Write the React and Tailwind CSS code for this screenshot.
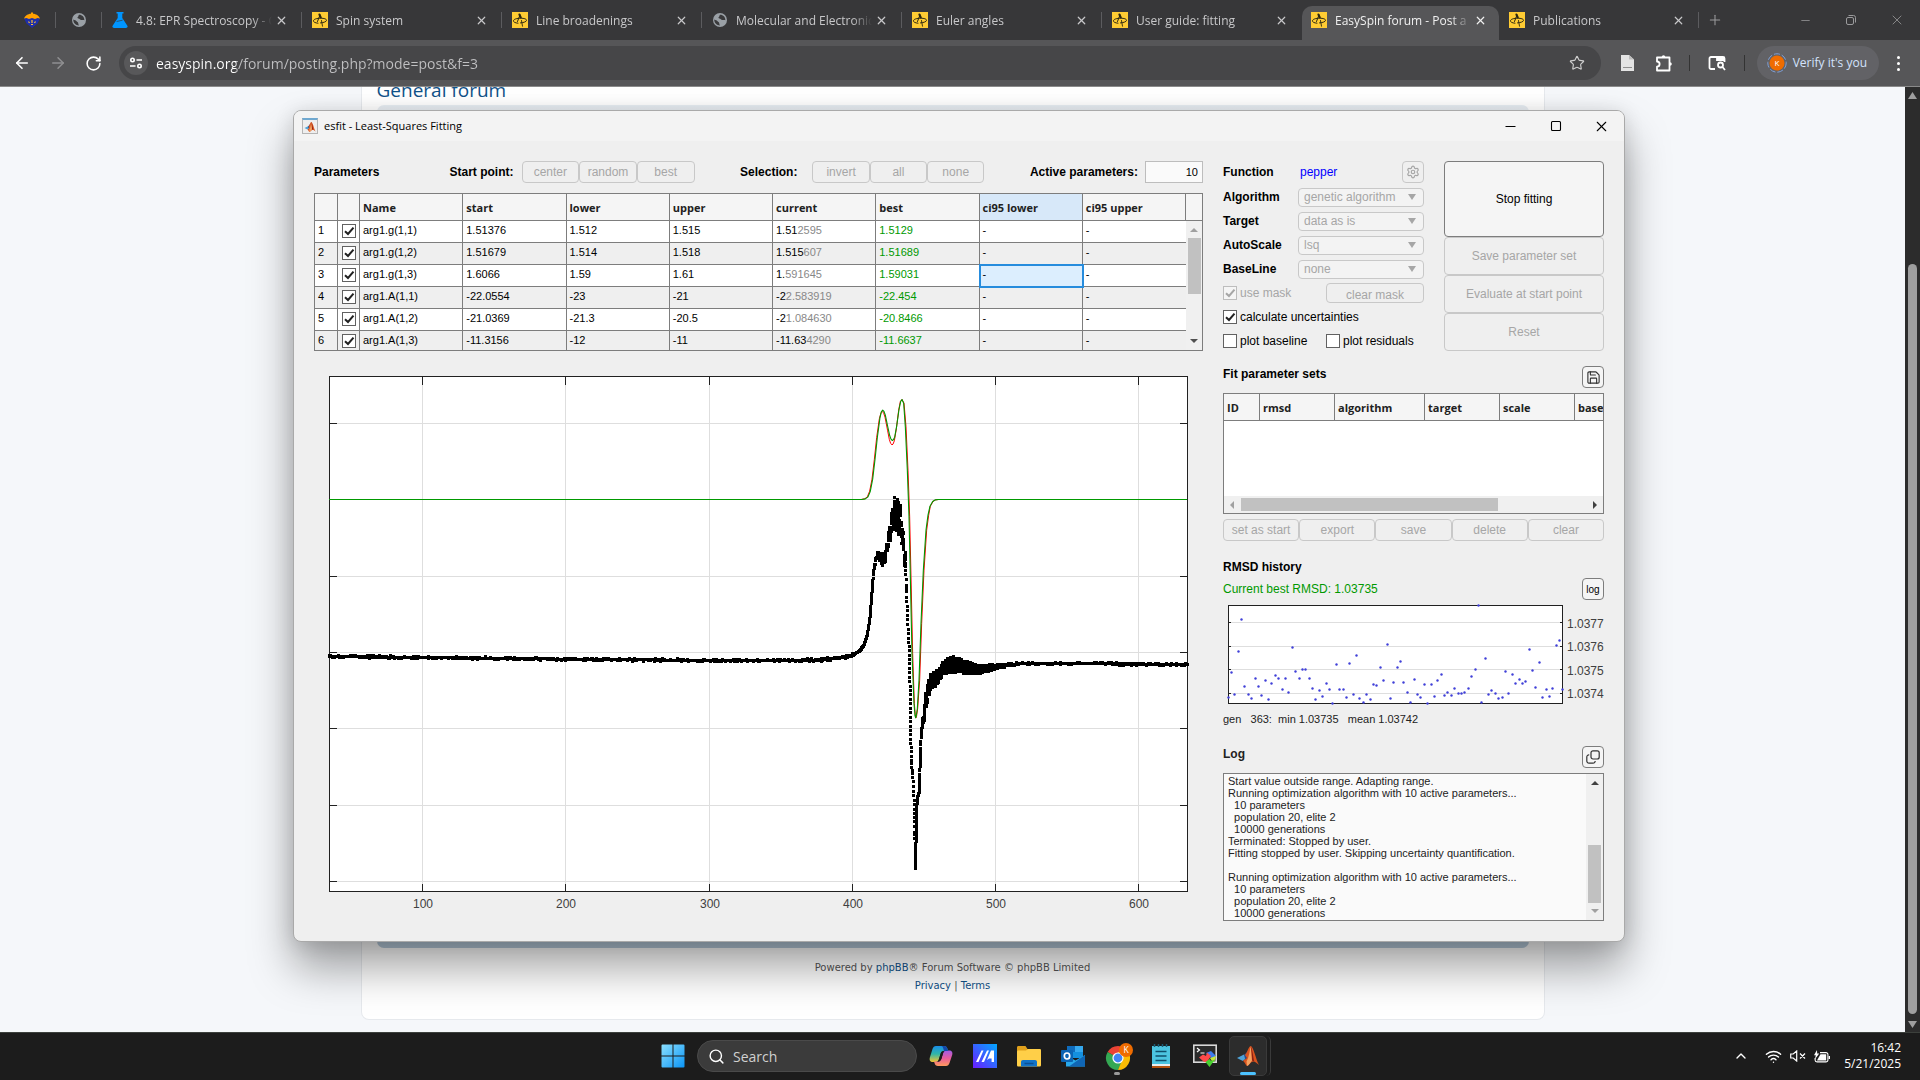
import {
  ArrowLeft,
  ArrowRight,
  ChevronUp,
  Minus,
  Plus,
  RotateCw,
  Save,
  Search,
  Settings,
  Square,
  Star,
  Wifi,
  X,
} from 'lucide-react';

const TABS = [
  { id: 'epr', icon: 'flask', title: '4.8: EPR Spectroscopy - C' },
  { id: 'spin', icon: 'easyspin', title: 'Spin system' },
  { id: 'line', icon: 'easyspin', title: 'Line broadenings' },
  { id: 'mol', icon: 'globe', title: 'Molecular and Electronic' },
  { id: 'euler', icon: 'easyspin', title: 'Euler angles' },
  { id: 'guide', icon: 'easyspin', title: 'User guide: fitting', last: true },
  { id: 'forum', icon: 'easyspin', title: 'EasySpin forum - Post a', active: true },
  { id: 'pubs', icon: 'easyspin', title: 'Publications' },
];

const PARAMETERS = [
  { name: 'arg1.g(1,1)', start: '1.51376', lower: '1.512', upper: '1.515', same: '1.51', rest: '2595', best: '1.5129' },
  { name: 'arg1.g(1,2)', start: '1.51679', lower: '1.514', upper: '1.518', same: '1.515', rest: '607', best: '1.51689' },
  { name: 'arg1.g(1,3)', start: '1.6066', lower: '1.59', upper: '1.61', same: '1.', rest: '591645', best: '1.59031', selected: true },
  { name: 'arg1.A(1,1)', start: '-22.0554', lower: '-23', upper: '-21', same: '-2', rest: '2.583919', best: '-22.454' },
  { name: 'arg1.A(1,2)', start: '-21.0369', lower: '-21.3', upper: '-20.5', same: '-2', rest: '1.084630', best: '-20.8466' },
  { name: 'arg1.A(1,3)', start: '-11.3156', lower: '-12', upper: '-11', same: '-11.63', rest: '4290', best: '-11.6637' },
];

const OPTIONS = [
  { id: 'algorithm', label: 'Algorithm', value: 'genetic algorithm' },
  { id: 'target', label: 'Target', value: 'data as is' },
  { id: 'autoscale', label: 'AutoScale', value: 'lsq' },
  { id: 'baseline', label: 'BaseLine', value: 'none' },
];

const LOG = `Start value outside range. Adapting range.
Running optimization algorithm with 10 active parameters...
  10 parameters
  population 20, elite 2
  10000 generations
Terminated: Stopped by user.
Fitting stopped by user. Skipping uncertainty quantification.

Running optimization algorithm with 10 active parameters...
  10 parameters
  population 20, elite 2
  10000 generations`;

const RMSD = [
  [0, 92], [3, 67], [6, 89], [10, 46], [13, 14], [16, 81], [20, 89], [23, 93], [27, 73], [30, 81], [33, 90], [37, 75],
  [40, 94], [43, 78], [47, 70], [50, 73], [54, 84], [57, 73], [60, 87], [64, 42], [67, 66], [71, 73], [74, 64], [77, 64],
  [81, 73], [84, 83], [87, 94], [91, 85], [94, 91], [98, 78], [101, 84], [104, 98], [108, 59], [111, 84], [115, 84],
  [118, 92], [121, 58], [125, 89], [128, 50], [131, 93], [135, 97], [138, 89], [142, 94], [145, 79], [148, 80], [152, 62],
  [155, 75], [159, 39], [162, 93], [165, 77], [169, 62], [172, 56], [175, 77], [179, 87], [182, 97], [186, 74], [189, 89],
  [192, 92], [196, 79], [199, 98], [203, 79], [206, 91], [209, 75], [213, 69], [216, 90], [219, 87], [223, 90], [226, 83],
  [230, 88], [233, 88], [236, 87], [240, 83], [243, 71], [247, 64], [250, 0], [253, 97], [257, 53], [260, 89], [263, 85],
  [267, 88], [270, 93], [274, 92], [277, 66], [280, 88], [284, 69], [287, 78], [291, 74], [294, 78], [297, 76], [301, 44],
  [304, 65], [307, 82], [311, 57], [314, 92], [318, 84], [321, 91], [324, 83], [328, 40], [331, 35], [334, 84],
];

// Spectra around the resonance, in thirds of a chart unit
const BEST = [
  [-1413, 388], [185, 388], [196, 386], [204, 380], [211, 363], [218, 327], [225, 268], [232, 202], [240, 142], [244, 125],
  [248, 120], [252, 124], [256, 135], [264, 173], [269, 196], [273, 207], [277, 211], [280, 209], [284, 201], [290, 168],
  [297, 118], [302, 94], [306, 88], [311, 99], [316, 170], [322, 300], [327, 440], [331, 620], [336, 850], [342, 1000],
  [345, 1036], [347, 1043], [349, 1036], [352, 1015], [357, 930], [363, 760], [370, 600], [378, 480], [384, 435],
  [390, 408], [398, 394], [406, 389], [415, 388], [1161, 388],
];
const CURRENT = [
  [-1413, 388], [183, 388], [194, 386], [202, 380], [209, 363], [216, 327], [223, 268], [230, 202], [238, 146], [243, 128],
  [247, 124], [251, 129], [255, 141], [263, 182], [268, 208], [272, 220], [276, 224], [279, 222], [283, 212], [289, 176],
  [296, 120], [301, 94], [306, 88], [312, 99], [318, 170], [324, 300], [329, 440], [333, 620], [338, 850], [343, 1000],
  [346, 1036], [348, 1043], [350, 1036], [353, 1015], [359, 930], [365, 760], [372, 600], [380, 480], [386, 435],
  [391, 408], [399, 394], [407, 389], [416, 388], [1161, 388],
];

// [x, y, ripple]
const TRACE = [
  [-1413, 858, 3], [-1134, 861, 3], [-702, 866, 3], [-273, 870, 3], [0, 870, 3], [60, 868, 3], [110, 864, 3], [140, 858, 3],
  [160, 852, 3], [178, 841, 2], [190, 825, 2], [200, 795, 2], [208, 745, 2], [214, 670, 3], [220, 600, 4], [227, 560, 6],
  [235, 553, 12], [246, 570, 16], [255, 560, 16], [262, 515, 22], [270, 480, 30], [278, 440, 44], [287, 428, 60],
  [296, 438, 50], [302, 450, 40], [308, 530, 50], [315, 560, 30], [316, 600, 4], [320, 720, 4], [324, 790, 4], [328, 880, 0],
  [329, 1000, 0], [331, 1080, 0], [332, 1170, 0], [337, 1220, 0], [341, 1290, 0], [343, 1380, 6], [345, 1494, 4],
  [347, 1390, 6], [350, 1285, 4], [356, 1265, 6], [359, 1180, 4], [362, 1085, 3], [368, 1055, 20], [375, 990, 24],
  [382, 970, 34], [390, 935, 24], [400, 930, 26], [412, 918, 20], [430, 890, 20], [450, 884, 24], [470, 882, 22],
  [490, 889, 18], [510, 893, 16], [540, 897, 12], [560, 893, 9], [600, 886, 5], [660, 880, 5], [720, 880, 3],
  [900, 879, 3], [1161, 883, 3],
];

const cx = (x) => 471 + x / 3;
const cy = (y) => y / 3 - 6;

function noise(i) {
  const s = Math.sin(i * 12.9898) * 43758.5453;
  return (s - Math.floor(s)) * 2 - 1;
}

function linePath(points) {
  return points.map(([x, y], i) => `${i ? 'L' : 'M'}${cx(x).toFixed(2)} ${(cy(y) + 0.17).toFixed(2)}`).join('');
}

function dotPath(knots) {
  let d = '';
  let n = 0;
  for (let k = 1; k < knots.length; k++) {
    const [x0, y0, a0] = knots[k - 1];
    const [x1, y1, a1] = knots[k];
    const rippled = Math.max(a0, a1) > 7;
    // samples thin out on the falling edge
    const spacing = x0 > 315 && x0 < 345 ? 14 : 8;
    const steps = Math.ceil(Math.max((x1 - x0) * (rippled ? 4 : 1), Math.abs(y1 - y0) / spacing, 2));
    for (let i = 0; i < steps; i++) {
      const t = i / steps;
      const x = x0 + (x1 - x0) * t;
      const amp = a0 + (a1 - a0) * t;
      const ripple = rippled ? Math.sin(x * 0.75) * amp * 0.75 + noise(n) * amp * 0.35 : noise(n) ** 7 * amp * 1.5;
      const y = y0 + (y1 - y0) * t + ripple;
      d += `M${Math.round(cx(x))} ${Math.round(cy(y))}h0`;
      n += 1;
    }
  }
  return d;
}

const X_TICKS = [
  [93, '100'],
  [236, '200'],
  [380, '300'],
  [523, '400'],
  [666, '500'],
  [809, '600'],
];
const Y_TICKS = [47, 123, 200, 276, 352, 429, 505];

function EasySpinIcon() {
  return (
    <svg viewBox="0 0 16 16" className="size-4 shrink-0">
      <rect width="16" height="16" fill="#ffcc33" />
      <g fill="none" stroke="#2b2712" strokeLinecap="round">
        <path d="M6 11.200C3 11 1.200 10 1.500 8.600c.3-1.400 3.500-2.400 7-2.400 3.800 0 6.200.9 6 2.200-.2 1.300-2.500 2.200-6 2.500" strokeWidth="1" />
        <path d="M9.500 8.500l1 5.700" strokeWidth=".9" />
        <path d="M8 3L5.500 9.500" strokeWidth="1" />
        <path d="M7.400 2.500l1.400 3" strokeWidth="2" />
      </g>
    </svg>
  );
}

function GlobeIcon() {
  return (
    <svg viewBox="0 0 16 16" className="size-4 shrink-0">
      <circle cx="8" cy="8" r="7" fill="#9aa0a6" />
      <path
        d="M2.2 7.5c1.6.6 2.8.8 3.4 1.8.5.9 1.5.8 1.6 1.8.1 1 .2 1.600.8 2.400C4.800 13.400 2.300 11 2.200 7.500zM8 2.800c-.8.8-.2 1.600-1.200 2.200-.8.5-.3 1.300.6 1.500 1.200.3 1.600 1.300 2.800 1.500 1.400.200 2.300-.2 3.200.2C13.300 5 11.200 2.700 8 2.800z"
        fill="#3a3a3c"
      />
    </svg>
  );
}

function FlaskIcon() {
  return (
    <svg viewBox="0 0 16 16" className="size-4 shrink-0" fill="#0095ff">
      <path d="M4.500 0h7v1.600h-7zM5.700 1.600h4.600v4.400l4.900 7.400c.9 1.300.2 2.600-1.300 2.600H2.100c-1.500 0-2.200-1.300-1.300-2.600l4.900-7.400z" />
      <path d="M4.600 9.500l6-1.300" stroke="#37373a" strokeWidth=".7" />
    </svg>
  );
}

function CrestIcon() {
  return (
    <svg viewBox="0 0 16 16" className="size-4">
      <path d="M0 6.500L8 5l8 1.500-2.500 5L8 16l-5.500-4.500z" fill="#1f2fa8" />
      <path d="M0 6.500C1.500 3 4.500 2 7 1.800V.5h2v1.300c2.500.2 5.500 1.200 7 4.700l-2.500-.5L11 7 8 6 5 7 2.500 6z" fill="#ffa000" />
      <path d="M4.500 9.500l1 1.500M8 8v3M11.500 9.500l-1 1.500M7 12.500h2" stroke="#ffc233" strokeWidth="1.200" />
    </svg>
  );
}

function TabIcon({ name }) {
  if (name === 'flask') return <FlaskIcon />;
  if (name === 'globe') return <GlobeIcon />;
  return <EasySpinIcon />;
}

function MatlabMark({ className }) {
  return (
    <svg viewBox="0 0 24 24" className={className}>
      <path d="M1 14l7-3.500 3 3.200L6.800 17z" fill="#4fa3d8" />
      <path d="M8 10.500c2-.5 3.300-3.300 5-5.500l-2 8.700-1.800 1.800z" fill="#2b4a8a" />
      <path d="M14.500 2c-1.700.5-3 6-5.500 9l2 3-4.200 3c1.800.4 2.600 4 4.200 5 2-.5 3.500-4 6-4.500 2.500 0 4 2 6 3.500-3-5-5.500-19-8.500-19z" fill="#d9531e" />
      <path d="M14.500 2c-.7 5-1.500 11-4 15.500L11 22c2-.5 3.500-4 5-5.500-.5-5-.5-10-1.500-14.500z" fill="#f4a261" />
      <path d="M14.500 2c1 4 1.500 9.500 1.500 14.500l2.300 1C17 12 16.500 5 14.500 2z" fill="#8c1f12" />
    </svg>
  );
}

function TabStrip() {
  return (
    <header className="flex h-10 items-stretch bg-[#373739] pl-[9px] font-['Open_Sans',sans-serif] text-[12px] text-[#c8c8ca]">
      <button aria-label="Pinned tab" className="flex w-[46px] items-center justify-center">
        <CrestIcon />
      </button>
      <span className="my-3 w-px bg-[#5c5c5f]" />
      <button aria-label="Pinned tab" className="flex w-[45px] items-center justify-center">
        <GlobeIcon />
      </button>
      <span className="my-3 w-px bg-[#5c5c5f]" />
      {TABS.map((tab) => (
        <div
          key={tab.id}
          className={
            tab.active
              ? 'mt-[6px] flex w-[197px] items-center rounded-t-[10px] bg-[#565658] pb-[6px] pl-[9px] pr-2 text-[#f0f0f0]'
              : 'flex w-[200px] items-center pl-[10px]'
          }
        >
          <TabIcon name={tab.icon} />
          <span className="ml-2 w-[136px] shrink-0 overflow-hidden whitespace-nowrap pt-[2px] [mask-image:linear-gradient(to_right,black_116px,transparent_136px)]">
            {tab.title}
          </span>
          <button aria-label={`Close ${tab.title}`} className="ml-[3px]">
            <X size={13} strokeWidth={2.2} />
          </button>
          {!tab.active && !tab.last && <span className="ml-auto h-4 w-px bg-[#5c5c5f]" />}
        </div>
      ))}
      <button aria-label="New tab" className="ml-2">
        <Plus size={16} strokeWidth={1.6} className="text-[#9a9a9c]" />
      </button>
      <div className="ml-auto flex items-center text-[#9a9a9c]">
        <button aria-label="Minimize" className="flex w-[46px] justify-center">
          <Minus size={13} strokeWidth={1.400} />
        </button>
        <button aria-label="Restore" className="flex w-[46px] justify-center">
          <svg viewBox="0 0 12 12" className="size-3" fill="none" stroke="currentColor">
            <rect x="1.500" y="3.500" width="7" height="7" rx="1.500" />
            <path d="M3.500 1.500h5a2 2 0 0 1 2 2v5" />
          </svg>
        </button>
        <button aria-label="Close" className="flex w-[46px] justify-center">
          <X size={16} strokeWidth={1.200} />
        </button>
      </div>
    </header>
  );
}

function Toolbar() {
  return (
    <nav className="flex h-[47px] items-center border-b border-[#8a8a8a] bg-[#565658] font-['Open_Sans',sans-serif] text-[#e8e8e8]">
      <button aria-label="Back" className="ml-[13px]">
        <ArrowLeft size={18} strokeWidth={2.200} className="text-white" />
      </button>
      <button aria-label="Forward" className="ml-[18px]">
        <ArrowRight size={18} strokeWidth={2} className="text-[#8f8f91]" />
      </button>
      <button aria-label="Reload" className="ml-[18px]">
        <RotateCw size={17} strokeWidth={2.200} className="text-white" />
      </button>
      <div className="ml-[17px] flex h-[34px] flex-1 items-center rounded-full bg-[#464648] pl-[5px] pr-4">
        <button aria-label="Site information" className="flex size-6 items-center justify-center rounded-full bg-[#58585a]">
          <svg viewBox="0 0 14 14" className="size-[14px]" fill="none" stroke="#fff" strokeWidth="1.600">
            <circle cx="3.500" cy="4" r="1.700" />
            <path d="M7.500 4H13M1 10h5.500" />
            <circle cx="10.500" cy="10" r="1.700" />
          </svg>
        </button>
        <input
          aria-label="Address"
          defaultValue="easyspin.org/forum/posting.php?mode=post&f=3"
          className="ml-2 flex-1 bg-[linear-gradient(to_right,#fff_80px,#c0c0c2_80px)] bg-clip-text text-[14px] text-transparent outline-none"
        />
        <button aria-label="Bookmark this tab">
          <Star size={16} strokeWidth={1.700} className="text-[#cfcfcf]" />
        </button>
      </div>
      <button aria-label="Reading list" className="ml-[19px]">
        <svg viewBox="0 0 14 16" className="h-4 w-[14px]">
          <path d="M1 0h8l5 4.500V16H1z" fill="#e4e4e4" />
          <path d="M9 0v4.500h5z" fill="#bdbdbd" />
          <path d="M3 12.500h9" stroke="#8f8f8f" />
        </svg>
      </button>
      <button aria-label="Extensions" className="ml-[21px]">
        <svg viewBox="0 0 18 18" className="size-[18px]" fill="none" stroke="#fff" strokeWidth="1.800" strokeLinejoin="round">
          <path d="M2 3.500h12.500v13H2v-3.800c1.600 0 2.600-1.200 2.600-2.600S3.600 7.500 2 7.500z" />
          <path d="M6.700 3a1.800 1.800 0 0 1 3.600 0zM15 8.200a1.800 1.800 0 0 1 0 3.600z" fill="#fff" stroke="none" />
        </svg>
      </button>
      <span className="ml-[16px] h-4 w-px bg-[#333]" />
      <button aria-label="Search tabs" className="ml-[18px]">
        <svg viewBox="0 0 18 16" className="h-4 w-[18px]" fill="none" stroke="#fff" strokeWidth="1.800">
          <path d="M7 14H3a1.500 1.500 0 0 1-1.500-1.500v-9A1.500 1.500 0 0 1 3 2h12a1.500 1.500 0 0 1 1.500 1.500V7" />
          <path d="M9 3h7v2H9z" fill="#fff" />
          <circle cx="12.500" cy="10" r="2.500" />
          <path d="M14.500 12l2.500 3" />
        </svg>
      </button>
      <span className="ml-[18px] h-4 w-px bg-[#333]" />
      <button className="ml-3 flex h-[34px] items-center rounded-full bg-[#626266] pl-[10px] pr-3 text-[12px] text-[#d3e3fd]">
        <svg viewBox="0 0 20 20" className="mr-[6px] size-5">
          <circle cx="10" cy="10" r="9.200" fill="none" stroke="#7e9fd6" strokeDasharray="6 2" />
          <circle cx="10" cy="10" r="7.500" fill="#ef6c00" />
          <text x="10" y="13" textAnchor="middle" fontSize="8" fill="#fff">K</text>
        </svg>
        Verify it's you
      </button>
      <button aria-label="Menu" className="ml-[18px] mr-5 flex flex-col gap-[3px]">
        <i className="size-[3px] rounded-full bg-white" />
        <i className="size-[3px] rounded-full bg-white" />
        <i className="size-[3px] rounded-full bg-white" />
      </button>
    </nav>
  );
}

function ForumPage() {
  return (
    <main className="flex min-h-0 flex-1 overflow-hidden bg-[#f5f7fa]">
      <div className="flex min-w-0 flex-1 flex-col pb-3">
        <div className="mx-auto flex w-[1184px] flex-1 flex-col rounded-b-[8px] border border-t-0 border-[#e6e9ed] bg-white px-[15px]">
          <h2 className="-mt-[11px] h-[29px] font-['Open_Sans',sans-serif] text-[19px]/[28px] font-medium text-[#105289]">General forum</h2>
          <div className="flex-1 rounded-[7px] bg-gradient-to-b from-[#e8eef3] to-[#b7cbdc]" />
          <footer className="h-[71px] pt-[11px] text-center font-['DejaVu_Sans',sans-serif] text-[10px]/[18px] text-[#555]">
            <p>
              Powered by <a href="#phpbb" className="text-[#105289]">phpBB</a>® Forum Software © phpBB Limited
            </p>
            <p>
              <a href="#privacy" className="text-[#105289]">Privacy</a> | <a href="#terms" className="text-[#105289]">Terms</a>
            </p>
          </footer>
        </div>
      </div>
      <div className="flex w-[15px] flex-col items-center bg-[#2c2c2c] pb-1 pt-[5px]">
        <svg viewBox="0 0 9 7" className="h-[7px] w-[9px]" fill="#9f9f9f"><path d="M4.500 0L9 7H0z" /></svg>
        <div className="mb-[7px] mt-[165px] w-[9px] flex-1 rounded-full bg-[#9f9f9f]" />
        <svg viewBox="0 0 9 7" className="h-[7px] w-[9px]" fill="#9f9f9f"><path d="M4.500 7L9 0H0z" /></svg>
      </div>
    </main>
  );
}

function CheckBox({ id, label, name, checked, disabled }) {
  return (
    <span className="flex items-center gap-[3px]">
      <span className="grid size-[14px] shrink-0">
        <input
          id={id}
          type="checkbox"
          aria-label={name}
          defaultChecked={checked}
          disabled={disabled}
          className="col-start-1 row-start-1 size-[14px] appearance-none border border-[#616161] bg-white disabled:border-[#bdbdbd] disabled:bg-[#f5f5f5]"
        />
        {checked && (
          <svg viewBox="0 0 14 14" className="pointer-events-none col-start-1 row-start-1 size-[14px]" fill="none">
            <path d="M3 7.200L6 10l5.500-6.300" stroke={disabled ? '#a6a6a6' : '#212121'} strokeWidth="2" />
          </svg>
        )}
      </span>
      {label && <label htmlFor={id} className={disabled ? 'text-[#a6a6a6]' : 'text-black'}>{label}</label>}
    </span>
  );
}

function GrayButton({ children, className = '' }) {
  return (
    <button disabled className={`rounded-[4px] border border-[#c8c8c8] text-[12px] text-[#a6a6a6] ${className}`}>
      {children}
    </button>
  );
}

function ParameterTable() {
  const head = "border-b border-r border-[#7d7d7d] pl-[3px] pt-[2px] text-left font-['Open_Sans',sans-serif] text-[11px] font-bold text-[#212121]";
  const cell = 'border-b border-r border-[#7d7d7d] pb-[2px] pl-[3px] leading-none';
  return (
    <div className="mt-[10px] flex h-[158px] overflow-hidden border border-[#7d7d7d]">
      <div className="min-w-0 flex-1">
        <table className="w-full table-fixed border-separate border-spacing-0 text-[11px] text-black">
          <colgroup>
            <col className="w-[23px]" />
            <col className="w-[22px]" />
            <col />
            <col />
            <col />
            <col />
            <col />
            <col />
            <col />
            <col />
          </colgroup>
          <thead>
            <tr className="h-[27px] bg-[#f5f5f5]">
              <th className={head} />
              <th className={head} />
              <th className={head}>Name</th>
              <th className={head}>start</th>
              <th className={head}>lower</th>
              <th className={head}>upper</th>
              <th className={head}>current</th>
              <th className={head}>best</th>
              <th className={`${head} bg-[#d7e8f9]`}>ci95 lower</th>
              <th className={head}>ci95 upper</th>
            </tr>
          </thead>
          <tbody>
            {PARAMETERS.map((p, i) => (
              <tr key={p.name} className="h-[22px] bg-white even:bg-[#efefef]">
                <td className={cell}>{i + 1}</td>
                <td className="border-b border-r border-[#7d7d7d] pb-px pl-1">
                  <CheckBox id={`fit-${i}`} name={`Fit ${p.name}`} checked />
                </td>
                <td className={cell}>{p.name}</td>
                <td className={cell}>{p.start}</td>
                <td className={cell}>{p.lower}</td>
                <td className={cell}>{p.upper}</td>
                <td className={cell}>
                  {p.same}
                  <span className="text-[#888]">{p.rest}</span>
                </td>
                <td className={`${cell} text-[#009900]`}>{p.best}</td>
                <td className={p.selected ? `${cell} bg-[#dceefe] outline-2 -outline-offset-1 outline-[#268cdd]` : cell}>-</td>
                <td className="border-b border-[#7d7d7d] pb-[2px] pl-[3px] leading-none">-</td>
              </tr>
            ))}
          </tbody>
        </table>
      </div>
      <div className="flex w-4 flex-col items-center bg-[#f0f0f0]">
        <div className="h-[27px] w-full border-b border-[#7d7d7d] bg-[#f5f5f5]" />
        <svg viewBox="0 0 8 4" className="mt-[7px] h-1 w-2" fill="#a0a0a0"><path d="M4 0l4 4H0z" /></svg>
        <div className="mt-[6px] h-14 w-[13px] bg-[#c1c1c1]" />
        <svg viewBox="0 0 8 4" className="mb-[7px] mt-auto h-1 w-2" fill="#505050"><path d="M4 4l4-4H0z" /></svg>
      </div>
    </div>
  );
}

function SpectrumChart() {
  return (
    <svg viewBox="0 0 859 536" className="mx-[15px] mt-[25px] overflow-visible" shapeRendering="crispEdges">
      <rect x=".5" y=".5" width="858" height="515" fill="#fff" />
      <g stroke="#dedede">
        {X_TICKS.map(([x]) => <path key={x} d={`M${x + 0.5} 1V515`} />)}
        {Y_TICKS.map((y) => <path key={y} d={`M1 ${y + 0.5}H858`} />)}
      </g>
      <g stroke="#212121" fill="none">
        {X_TICKS.map(([x]) => <path key={x} d={`M${x + 0.5} 1v8M${x + 0.5} 515v-7`} />)}
        {Y_TICKS.map((y) => <path key={y} d={`M1 ${y + 0.5}h7M858 ${y + 0.5}h-7`} />)}
        <rect x=".5" y=".5" width="858" height="515" />
      </g>
      <path d={dotPath(TRACE)} stroke="#000" strokeWidth="3" strokeLinecap="square" />
      <g fill="none" strokeLinejoin="round" shapeRendering="geometricPrecision">
        <path d={linePath(CURRENT)} stroke="#ff0000" />
        <path d={linePath(BEST)} stroke="#009900" strokeWidth="1.100" />
      </g>
      <g fill="#404040" fontSize="12" textAnchor="middle" shapeRendering="auto">
        {X_TICKS.map(([x, label]) => <text key={x} x={x + 1} y="532">{label}</text>)}
      </g>
    </svg>
  );
}

function FitOptions() {
  return (
    <div className="flex w-[201px] flex-col text-[12px]">
      <div className="mb-[2px] flex h-[22px] items-center">
        <b className="w-[77px]">Function</b>
        <span className="text-[#0000ff]">pepper</span>
        <button aria-label="Function settings" disabled className="ml-auto flex size-[22px] items-center justify-center rounded-[4px] border border-[#c8c8c8] text-[#a6a6a6]">
          <Settings size={14} strokeWidth={2} />
        </button>
      </div>
      {OPTIONS.map((o) => (
        <div key={o.id} className="flex h-6 items-center">
          <label htmlFor={o.id} className="w-[75px] font-bold">{o.label}</label>
          <div className="grid flex-1 items-center">
            <select
              id={o.id}
              disabled
              className="col-start-1 row-start-1 h-[19px] appearance-none rounded-[4px] border border-[#c8c8c8] bg-[#f3f3f3] pl-[5px] text-[12px]/[15px] text-[#a6a6a6] opacity-100"
            >
              <option>{o.value}</option>
            </select>
            <svg viewBox="0 0 8 6" className="pointer-events-none col-start-1 row-start-1 mr-2 h-[6px] w-2 justify-self-end" fill="#a6a6a6">
              <path d="M0 0h8L4 6z" />
            </svg>
          </div>
        </div>
      ))}
      <div className="flex h-6 items-center justify-between">
        <CheckBox id="mask" label="use mask" checked disabled />
        <GrayButton className="h-5 w-[98px] pt-[2px]">clear mask</GrayButton>
      </div>
      <div className="flex h-6 items-center">
        <CheckBox id="uncertainties" label="calculate uncertainties" checked />
      </div>
      <div className="grid h-6 grid-cols-[103px_1fr] items-center whitespace-nowrap">
        <CheckBox id="plot-baseline" label="plot baseline" />
        <CheckBox id="plot-residuals" label="plot residuals" />
      </div>
    </div>
  );
}

function ParameterSets() {
  const head = "border-b border-r border-[#7d7d7d] pl-[3px] pt-[2px] text-left font-['Open_Sans',sans-serif] text-[11px] font-bold text-[#212121]";
  return (
    <section className="flex flex-col">
      <div className="flex h-[22px] items-center">
        <h3 className="-mt-[6px] text-[12px] font-bold">Fit parameter sets</h3>
        <button aria-label="Save sets" className="ml-auto flex size-[22px] items-center justify-center rounded-[4px] border border-[#7d7d7d] bg-[#f5f5f5]">
          <Save size={15} strokeWidth={1.800} className="text-[#333]" />
        </button>
      </div>
      <div className="mt-[5px] flex h-[121px] flex-col overflow-hidden border border-[#7d7d7d] bg-white">
        <table className="w-full table-fixed border-separate border-spacing-0 bg-[#f5f5f5]">
          <thead>
            <tr className="h-[27px]">
              <th className={`${head} w-[36px]`}>ID</th>
              <th className={`${head} w-[75px]`}>rmsd</th>
              <th className={`${head} w-[90px]`}>algorithm</th>
              <th className={`${head} w-[75px]`}>target</th>
              <th className={`${head} w-[75px]`}>scale</th>
              <th className={`${head} overflow-hidden border-r-0`}>base</th>
            </tr>
          </thead>
        </table>
        <div className="mt-auto flex h-[17px] items-center bg-[#f0f0f0] px-[6px]">
          <svg viewBox="0 0 4 8" className="h-2 w-1" fill="#a0a0a0"><path d="M4 0v8L0 4z" /></svg>
          <div className="ml-[7px] h-[13px] w-[257px] bg-[#c1c1c1]" />
          <svg viewBox="0 0 4 8" className="ml-auto h-2 w-1" fill="#404040"><path d="M0 0v8l4-4z" /></svg>
        </div>
      </div>
      <div className="mt-[5px] grid grid-cols-5">
        <GrayButton className="h-[22px]">set as start</GrayButton>
        <GrayButton className="h-[22px]">export</GrayButton>
        <GrayButton className="h-[22px]">save</GrayButton>
        <GrayButton className="h-[22px]">delete</GrayButton>
        <GrayButton className="h-[22px]">clear</GrayButton>
      </div>
    </section>
  );
}

function RmsdHistory() {
  return (
    <section className="mt-[18px]">
      <h3 className="h-[16px] text-[12px]/[16px] font-bold">RMSD history</h3>
      <div className="mt-[3px] flex h-[22px] items-center justify-between">
        <p className="text-[12px] text-[#009900]">Current best RMSD: 1.03735</p>
        <button className="size-[22px] rounded-[4px] border border-[#7d7d7d] bg-[#f5f5f5] text-[10px]">log</button>
      </div>
      <svg viewBox="0 0 376 99" className="ml-[5px] mt-[5px] w-[376px] overflow-visible">
        <rect x=".5" y=".5" width="334" height="98" fill="#fff" />
        {[17, 41, 64, 88].map((y) => <path key={y} d={`M1 ${y + 0.5}H334`} stroke="#dedede" />)}
        <rect x=".5" y=".5" width="334" height="98" fill="none" stroke="#212121" />
        {[17, 41, 64, 88].map((y) => <path key={y} d={`M1 ${y + 0.5}h2M334 ${y + 0.5}h-2`} stroke="#212121" />)}
        <g fill="#4040d8">
          {RMSD.map(([x, y]) => <circle key={x} cx={x + 0.5} cy={y + 0.5} r="1.200" />)}
        </g>
        <g fill="#404040" fontSize="12">
          <text x="339" y="23">1.0377</text>
          <text x="339" y="46">1.0376</text>
          <text x="339" y="70">1.0375</text>
          <text x="339" y="93">1.0374</text>
        </g>
      </svg>
      <p className="mt-[8px] h-[14px] whitespace-pre text-[11px]/[14px] text-[#222]">gen   363:  min 1.03735   mean 1.03742</p>
    </section>
  );
}

function LogPanel() {
  return (
    <section className="mt-5">
      <div className="flex h-[22px] items-center">
        <label htmlFor="log" className="-mt-[6px] text-[12px] font-bold text-[#222]">Log</label>
        <button aria-label="Copy log" className="ml-auto flex size-[22px] items-center justify-center rounded-[4px] border border-[#7d7d7d] bg-[#f5f5f5]">
          <svg viewBox="0 0 14 14" className="size-[14px]" fill="none" stroke="#333" strokeWidth="1.200">
            <rect x="5" y=".8" width="8.200" height="8.200" rx="2" />
            <path d="M3.200 4.800A2.200 2.200 0 0 0 .8 7v4a2.200 2.200 0 0 0 2.200 2.200h4A2.200 2.200 0 0 0 9.200 11" />
          </svg>
        </button>
      </div>
      <div className="mt-[5px] flex h-[148px] border border-[#7d7d7d] bg-[#fafafa]">
        <textarea
          id="log"
          readOnly
          value={LOG}
          className="flex-1 resize-none overflow-hidden whitespace-pre pl-1 pt-px text-[11px]/[12px] text-[#222] outline-none"
        />
        <div className="flex w-[17px] flex-col items-center bg-[#f0f0f0] py-[7px]">
          <svg viewBox="0 0 8 4" className="h-1 w-2" fill="#404040"><path d="M4 0l4 4H0z" /></svg>
          <div className="mt-[60px] h-[58px] w-[13px] bg-[#c1c1c1]" />
          <svg viewBox="0 0 8 4" className="mt-auto h-1 w-2" fill="#a0a0a0"><path d="M4 4l4-4H0z" /></svg>
        </div>
      </div>
    </section>
  );
}

function FitWindow() {
  return (
    <div className="absolute left-[293px] right-[295px] top-[110px] overflow-hidden rounded-[8px] border border-[#a9a9a9] bg-[#efefef] font-['Liberation_Sans',Arial,sans-serif] text-black shadow-[0_26px_44px_rgba(0,0,0,0.36),0_2px_20px_rgba(0,0,0,0.12)]">
      <div className="flex h-[30px] items-center bg-[#f3f3f3] pl-2 font-['Open_Sans',sans-serif] text-[11px]">
        <span className="flex size-4 items-end justify-center border border-t-2 border-[#b5b5b5] border-t-[#6fa8d0] bg-[#eee]">
          <MatlabMark className="size-3" />
        </span>
        <span className="ml-[6px]">esfit - Least-Squares Fitting</span>
        <button aria-label="Minimize" className="ml-auto flex w-[46px] justify-center">
          <svg viewBox="0 0 11 11" className="size-[11px]"><path d="M.5 5.500h10" stroke="#000" /></svg>
        </button>
        <button aria-label="Maximize" className="flex w-[45px] justify-center">
          <Square size={12} strokeWidth={2.200} />
        </button>
        <button aria-label="Close" className="flex w-[46px] justify-center">
          <X size={17} strokeWidth={1.500} />
        </button>
      </div>
      <div className="flex gap-5 p-5">
        <div className="min-w-0 flex-1">
          <div className="flex h-[22px] items-center justify-between text-[12px] font-bold">
            <h3 className="w-[90px]">Parameters</h3>
            <div className="flex items-center gap-2">
              Start point:
              <div className="grid w-[173px] grid-cols-3 font-normal">
                <GrayButton className="h-[22px]">center</GrayButton>
                <GrayButton className="h-[22px]">random</GrayButton>
                <GrayButton className="h-[22px]">best</GrayButton>
              </div>
            </div>
            <div className="flex items-center gap-[15px]">
              Selection:
              <div className="grid w-[172px] grid-cols-3 font-normal">
                <GrayButton className="h-[22px]">invert</GrayButton>
                <GrayButton className="h-[22px]">all</GrayButton>
                <GrayButton className="h-[22px]">none</GrayButton>
              </div>
            </div>
            <div className="flex items-center gap-[7px]">
              <label htmlFor="active">Active parameters:</label>
              <input
                id="active"
                readOnly
                value="10"
                className="h-[22px] w-[58px] border border-[#bdbdbd] bg-[#fafafa] pr-1 text-right text-[11px] font-normal"
              />
            </div>
          </div>
          <ParameterTable />
          <SpectrumChart />
        </div>
        <div className="w-[381px] shrink-0">
          <div className="flex h-[205px] items-start justify-between">
            <FitOptions />
            <div className="flex w-40 flex-col">
              <button className="h-[76px] rounded-[4px] border border-[#7d7d7d] bg-[#f5f5f5] text-[12px]">Stop fitting</button>
              <GrayButton className="h-[38px]">Save parameter set</GrayButton>
              <GrayButton className="h-[38px]">Evaluate at start point</GrayButton>
              <GrayButton className="h-[38px]">Reset</GrayButton>
            </div>
          </div>
          <ParameterSets />
          <RmsdHistory />
          <LogPanel />
        </div>
      </div>
    </div>
  );
}

function CopilotIcon() {
  return (
    <svg viewBox="0 0 24 24" className="size-6">
      <defs>
        <linearGradient id="cp1" x1="0" y1="0" x2="0" y2="1">
          <stop offset="0" stopColor="#1a8ee8" />
          <stop offset=".5" stopColor="#2fb6a8" />
          <stop offset="1" stopColor="#f4c430" />
        </linearGradient>
        <linearGradient id="cp2" x1="0" y1="0" x2="0" y2="1">
          <stop offset="0" stopColor="#a05ce8" />
          <stop offset=".5" stopColor="#e85c9c" />
          <stop offset="1" stopColor="#ff9a5c" />
        </linearGradient>
      </defs>
      <path d="M7 2h8c2 0 3 1 3.500 3L19 7h-4c-2 0-3 1-3.500 3l-1.500 5c-.5 2-1.500 3-3.500 3H4c-3 0-4-2-3-5l2.500-8C4.200 3 5.200 2 7 2z" fill="url(#cp1)" />
      <path d="M17 22H9c-2 0-3-1-3.500-3L5 17.500h4c2 0 3-1.500 3.500-3l1.500-5C14.500 7.500 15.500 6.500 17.500 6.500H20c3 0 4 2 3 5l-2.500 7.500c-.7 2-1.700 3-3.500 3z" fill="url(#cp2)" />
      <path d="M15 7c-2 0-3 1-3.500 3L10 15c-.5 1.500-1 2.500-2 2.800h1c2 0 3-1.500 3.500-3.300l1.500-5c.4-1.600 1.200-2.600 2.500-3z" fill="#1c1c1c" />
      <path d="M15 2c2 0 3 1 3.500 3L19 7h-4c-.800-3-1-5-3-5z" fill="#1447a8" />
    </svg>
  );
}

function AppIcon({ name }) {
  switch (name) {
    case 'Copilot':
      return <CopilotIcon />;
    case 'MyAsus':
      return (
        <svg viewBox="0 0 24 24" className="size-6">
          <defs>
            <linearGradient id="ma" x1="0" y1="1" x2="1" y2="0">
              <stop offset="0" stopColor="#6a1cff" />
              <stop offset="1" stopColor="#00a8ff" />
            </linearGradient>
          </defs>
          <rect width="24" height="24" fill="url(#ma)" />
          <path d="M3 18L8.500 6.500h2L5.500 18zM8.500 18L14 6.500h2L11 18zM14 16l4-9.500h3V18h-2.400v-3.500H16z" fill="#fff" />
        </svg>
      );
    case 'File Explorer':
      return (
        <svg viewBox="0 0 24 24" className="size-6">
          <path d="M0 3.500C0 2.500.6 2 1.500 2h7L10.500 5H22c1.200 0 2 .6 2 1.800V9H0z" fill="#e0a01c" />
          <path d="M0 8c0-1 .6-1.500 1.500-1.500h7.500L11 5h11.500c1 0 1.500.6 1.500 1.500V21c0 1-.6 1.500-1.500 1.500h-21C.6 22.500 0 22 0 21z" fill="#ffcf48" />
          <path d="M4 22.500V18c0-1.200.8-2 2-2h12c1.200 0 2 .8 2 2v4.500z" fill="#1173c7" />
          <path d="M7.500 19.500h9" stroke="#0b4f92" strokeWidth="1.500" />
        </svg>
      );
    case 'Outlook':
      return (
        <svg viewBox="0 0 24 24" className="size-6">
          <path d="M6 2h16v12H6z" fill="#1490df" />
          <path d="M6 2h8v6H6z" fill="#0f6cbd" />
          <path d="M14 2h8v6h-8z" fill="#35a8ee" />
          <path d="M5 11l9.500 5.500L24 11v11.500H5z" fill="#28a8ea" />
          <path d="M24 11v11.500H8z" fill="#1066b5" />
          <rect y="6" width="12" height="12" rx="1" fill="#0a64b4" />
          <ellipse cx="6" cy="12" rx="2.700" ry="3" fill="none" stroke="#fff" strokeWidth="1.700" />
        </svg>
      );
    case 'Chrome':
      return (
        <svg viewBox="0 0 28 28" className="ml-1 size-7">
          <path d="M13 15L2.600 9A12 12 0 0 1 23.400 9z" fill="#ea4335" />
          <path d="M13 15L2.600 9A12 12 0 0 0 13 27l5-9z" fill="#34a853" />
          <path d="M13 15h5L13 27A12 12 0 0 0 23.400 9H13z" fill="#fbbc04" />
          <circle cx="13" cy="15" r="5.600" fill="#fff" />
          <circle cx="13" cy="15" r="4.400" fill="#4285f4" />
          <circle cx="21" cy="7" r="7" fill="#ef6c00" />
          <text x="21" y="10" textAnchor="middle" fontSize="8.500" fill="#fff">K</text>
        </svg>
      );
    case 'Notepad':
      return (
        <svg viewBox="0 0 24 24" className="size-6">
          <path d="M3 2h18v20H3z" fill="#4cc4e0" />
          <path d="M5.500 0v3M9.500 0v3M13.500 0v3M17.500 0v3" stroke="#1b5c74" strokeWidth="1.500" />
          <path d="M6.500 7.500h11M6.500 12h11M6.500 16.500h11" stroke="#0f4f6b" strokeWidth="1.600" />
          <path d="M3 20h18v2H3z" fill="#e8eef0" />
          <path d="M3 22h18v2H3z" fill="#b5520f" />
        </svg>
      );
    case 'Terminal':
      return (
        <svg viewBox="0 0 24 24" className="size-6">
          <rect x=".8" y="1.200" width="22.400" height="17" fill="#2b2b2b" stroke="#d8d8d8" strokeWidth="1.600" />
          <path d="M4 4l2.500 2L4 8M7.500 9h4" stroke="#fff" fill="none" strokeWidth="1.200" />
          <path d="M13 9l5-2 5 5-4 3z" fill="#3d7cf0" />
          <path d="M6 13.500l4-3 3 1.500 1-3.500 4 3.500-4.500 6.500-3-1z" fill="#ff4a4a" />
          <path d="M17 14l6-2-1.500 5-2 1z" fill="#c8e838" />
          <path d="M12.500 18l4-3 1.500 2 4-1.500-5.500 7.500z" fill="#48d030" />
        </svg>
      );
    default:
      return <MatlabMark className="size-6" />;
  }
}

const APPS = ['Copilot', 'MyAsus', 'File Explorer', 'Outlook', 'Chrome', 'Notepad', 'Terminal'];

function Taskbar() {
  return (
    <footer className="grid h-12 grid-cols-[1fr_auto_1fr] items-center border-t border-[#3c403c] bg-[#1c1c1c] pb-px font-['Open_Sans',sans-serif] text-white">
      <span />
      <div className="flex items-center pl-[2px]">
        <button aria-label="Start" className="flex w-11 justify-center">
          <svg viewBox="0 0 24 24" className="size-6">
            <defs>
              <linearGradient id="win" x1="0" y1="0" x2="1" y2="1">
                <stop offset="0" stopColor="#8be0ff" />
                <stop offset="1" stopColor="#0a94f5" />
              </linearGradient>
            </defs>
            <path d="M.5 1.500A1 1 0 0 1 1.500.5h10v11H.5zM12.500.5h10a1 1 0 0 1 1 1v10h-11zM.5 12.500h11v11h-10a1 1 0 0 1-1-1zM12.500 12.500h11v10a1 1 0 0 1-1 1h-10z" fill="url(#win)" />
          </svg>
        </button>
        <button className="mx-[2px] flex h-8 w-[220px] items-center gap-2 rounded-full border border-[#4a4a4a] bg-[#3b3b3b] pl-[10px] text-[14px] text-[#d0d0d0]">
          <Search size={17} strokeWidth={2} className="text-white" />
          Search
        </button>
        {APPS.map((app) => (
          <button key={app} aria-label={app} className="flex h-11 w-11 flex-col items-center justify-center">
            <AppIcon name={app} />
            {app === 'Chrome' && <i className="-mb-[6px] mt-px h-[3px] w-[6px] rounded-full bg-[#9a9a9a]" />}
          </button>
        ))}
        <span className="flex w-11 pl-[2px]">
          <span className="flex w-[42px] rounded-[5px] border-r border-[#3a3a3a]">
            <button aria-label="MATLAB" className="flex h-10 w-[38px] flex-col items-center justify-end rounded-[5px] border border-[#3a3a3a] bg-[#2c2c2c]">
              <AppIcon name="MATLAB" />
              <i className="mt-[4px] h-[3px] w-4 rounded-full bg-[#4cc2ff]" />
            </button>
          </span>
        </span>
      </div>
      <div className="flex items-center justify-end pr-[19px]">
        <ChevronUp size={16} strokeWidth={2} />
        <Wifi size={17} strokeWidth={2} className="ml-[16px]" />
        <svg viewBox="0 0 16 12" className="ml-2 h-3 w-4" fill="none" stroke="#fff" strokeWidth="1.200">
          <path d="M.7 4v4h2.500l3.500 3V1L3.200 4zM10 3.500l5 5M15 3.500l-5 5" />
        </svg>
        <svg viewBox="0 0 16 13" className="ml-2 h-[13px] w-4" fill="#fff">
          <path d="M6 2.600h6a1.900 1.900 0 0 1 1.900 1.900v5.500a1.900 1.900 0 0 1-1.900 1.900H3a1.900 1.900 0 0 1-1.900-1.900V8" fill="none" stroke="#fff" strokeWidth="1.100" />
          <path d="M6.500 4.200h5.700v6.200H3z" />
          <path d="M14.600 6H16v3h-1.400z" />
          <path d="M3 0L0 5.200h1.800L1 9.200l4.200-5.700H3.200z" />
        </svg>
        <div className="w-[71px] text-right text-[12px]/[16px]">
          <p>16:42</p>
          <p>5/21/2025</p>
        </div>
      </div>
    </footer>
  );
}

export default function App() {
  return (
    <div className="relative flex h-screen flex-col overflow-hidden">
      <TabStrip />
      <Toolbar />
      <ForumPage />
      <div className="z-10">
        <Taskbar />
      </div>
      <FitWindow />
    </div>
  );
}
